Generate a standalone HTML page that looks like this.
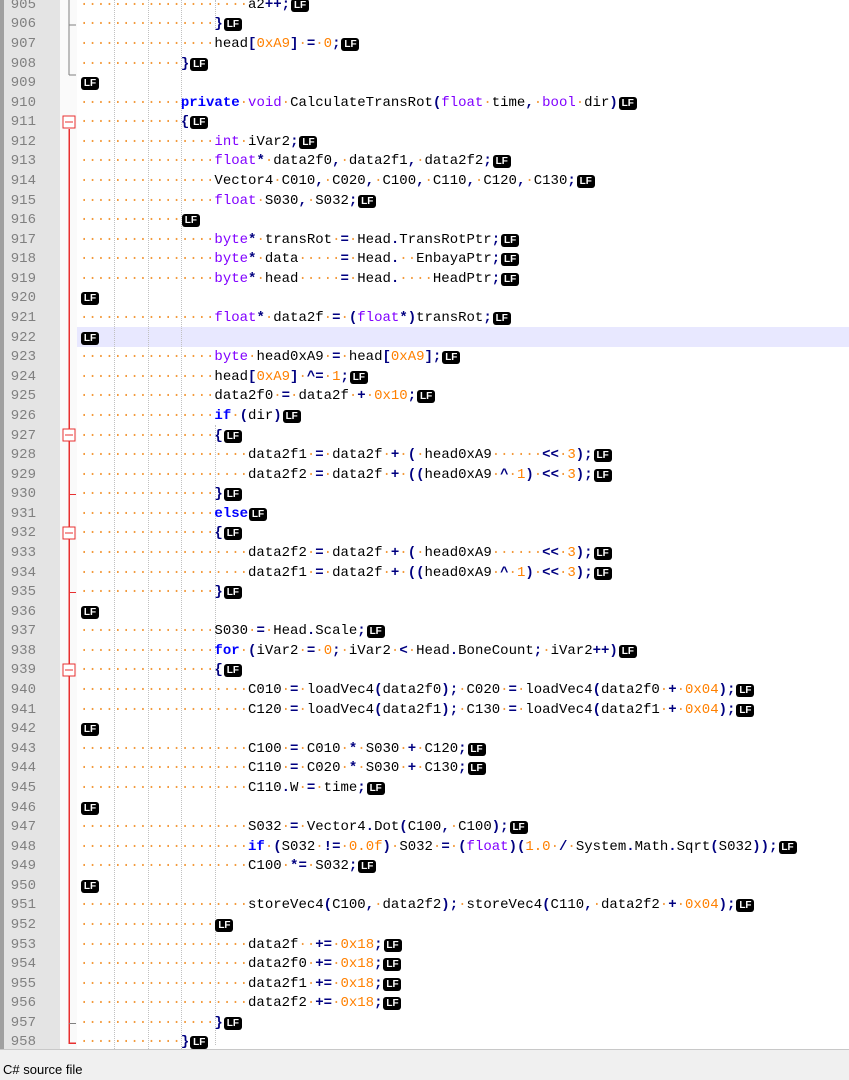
<!DOCTYPE html>
<html><head><meta charset="utf-8"><style>
*{margin:0;padding:0;box-sizing:border-box}
body{width:849px;height:1080px;overflow:hidden;background:#fff;position:relative;font-family:"Liberation Mono",monospace;font-size:14px}
#lb{position:absolute;left:0;top:0;width:4px;height:1049px;background:#a0a0a0}
#gut{position:absolute;left:4px;top:0;width:56px;height:1049px;background:#e4e4e4}
#fold{position:absolute;left:60px;top:0;width:17px;height:1049px;background:#fafafa}
#nums{position:absolute;left:0;top:-4.2px;width:36px;text-align:right;color:#808080;line-height:19.58px;white-space:pre}
#code{position:absolute;left:80px;top:-4.2px;line-height:19.58px;white-space:pre;color:#000}
#cur{position:absolute;left:77px;right:0;top:327.3px;height:19.6px;background:#e8e8ff}
.g{position:absolute;width:0;border-left:1px dotted #c0c0c0}
i{font-style:normal;color:#f39a3c}
.t{color:#8000ff}
.k{color:#0000ff;font-weight:bold}
.n{color:#ff8000}
.o{color:#000080;font-weight:bold}
u{text-decoration:none;display:inline-block;background:#000;color:#fff;font:bold 10px/13px "Liberation Sans",sans-serif;border-radius:3px;width:18px;text-align:center;vertical-align:0px;margin-left:1px;letter-spacing:0}
#sb{position:absolute;left:0;top:1049px;width:849px;height:31px;background:#f0f0f0;border-top:1px solid #c8c8c8;font:13px "Liberation Sans",sans-serif;color:#000;padding:12px 0 0 3px}
</style></head><body>
<div id="lb"></div><div id="gut"></div><div id="fold"></div>
<div id="cur"></div>
<div class="g" style="left:114px;top:0;height:1049px"></div>
<div class="g" style="left:148px;top:0;height:1049px"></div>
<div class="g" style="left:181px;top:0;height:1049px"></div>
<div class="g" style="left:215px;top:0;height:30px"></div>
<div class="g" style="left:215px;top:425px;height:620px"></div>
<svg style="position:absolute;left:60px;top:0" width="17" height="1049" shape-rendering="crispEdges">
<line x1="9" y1="0" x2="9" y2="75" stroke="#808080"/>
<line x1="9" y1="25" x2="16" y2="25" stroke="#808080"/>
<line x1="9" y1="75" x2="16" y2="75" stroke="#808080"/>
<line x1="9" y1="129" x2="9" y2="1044" stroke="#e83030" stroke-width="1.5"/>
<line x1="9" y1="1043" x2="16" y2="1043" stroke="#e83030" stroke-width="1.5"/>
<line x1="9" y1="494.6" x2="16" y2="494.6" stroke="#e83030"/>
<line x1="9" y1="592.5" x2="16" y2="592.5" stroke="#e83030"/>
<line x1="9" y1="1023.5" x2="16" y2="1023.5" stroke="#808080"/>
<g fill="#fff" stroke="#e83030">
<rect x="3" y="116" width="12" height="12"/>
<rect x="3" y="429" width="12" height="12"/>
<rect x="3" y="527" width="12" height="12"/>
<rect x="3" y="664" width="12" height="12"/>
</g>
<g stroke="#e83030"><line x1="5" y1="122" x2="13" y2="122"/><line x1="5" y1="435" x2="13" y2="435"/><line x1="5" y1="533" x2="13" y2="533"/><line x1="5" y1="670" x2="13" y2="670"/></g>
</svg>
<div id="nums">905
906
907
908
909
910
911
912
913
914
915
916
917
918
919
920
921
922
923
924
925
926
927
928
929
930
931
932
933
934
935
936
937
938
939
940
941
942
943
944
945
946
947
948
949
950
951
952
953
954
955
956
957
958</div>
<div id="code"><i>····················</i>a2<span class="o">++;</span><u>LF</u>
<i>················</i><span class="o">}</span><u>LF</u>
<i>················</i>head<span class="o">[</span><span class="n">0xA9</span><span class="o">]</span><i>·</i><span class="o">=</span><i>·</i><span class="n">0</span><span class="o">;</span><u>LF</u>
<i>············</i><span class="o">}</span><u>LF</u>
<u>LF</u>
<i>············</i><span class="k">private</span><i>·</i><span class="t">void</span><i>·</i>CalculateTransRot<span class="o">(</span><span class="t">float</span><i>·</i>time<span class="o">,</span><i>·</i><span class="t">bool</span><i>·</i>dir<span class="o">)</span><u>LF</u>
<i>············</i><span class="o">{</span><u>LF</u>
<i>················</i><span class="t">int</span><i>·</i>iVar2<span class="o">;</span><u>LF</u>
<i>················</i><span class="t">float</span><span class="o">*</span><i>·</i>data2f0<span class="o">,</span><i>·</i>data2f1<span class="o">,</span><i>·</i>data2f2<span class="o">;</span><u>LF</u>
<i>················</i>Vector4<i>·</i>C010<span class="o">,</span><i>·</i>C020<span class="o">,</span><i>·</i>C100<span class="o">,</span><i>·</i>C110<span class="o">,</span><i>·</i>C120<span class="o">,</span><i>·</i>C130<span class="o">;</span><u>LF</u>
<i>················</i><span class="t">float</span><i>·</i>S030<span class="o">,</span><i>·</i>S032<span class="o">;</span><u>LF</u>
<i>············</i><u>LF</u>
<i>················</i><span class="t">byte</span><span class="o">*</span><i>·</i>transRot<i>·</i><span class="o">=</span><i>·</i>Head<span class="o">.</span>TransRotPtr<span class="o">;</span><u>LF</u>
<i>················</i><span class="t">byte</span><span class="o">*</span><i>·</i>data<i>·····</i><span class="o">=</span><i>·</i>Head<span class="o">.</span><i>··</i>EnbayaPtr<span class="o">;</span><u>LF</u>
<i>················</i><span class="t">byte</span><span class="o">*</span><i>·</i>head<i>·····</i><span class="o">=</span><i>·</i>Head<span class="o">.</span><i>····</i>HeadPtr<span class="o">;</span><u>LF</u>
<u>LF</u>
<i>················</i><span class="t">float</span><span class="o">*</span><i>·</i>data2f<i>·</i><span class="o">=</span><i>·</i><span class="o">(</span><span class="t">float</span><span class="o">*)</span>transRot<span class="o">;</span><u>LF</u>
<u>LF</u>
<i>················</i><span class="t">byte</span><i>·</i>head0xA9<i>·</i><span class="o">=</span><i>·</i>head<span class="o">[</span><span class="n">0xA9</span><span class="o">];</span><u>LF</u>
<i>················</i>head<span class="o">[</span><span class="n">0xA9</span><span class="o">]</span><i>·</i><span class="o">^=</span><i>·</i><span class="n">1</span><span class="o">;</span><u>LF</u>
<i>················</i>data2f0<i>·</i><span class="o">=</span><i>·</i>data2f<i>·</i><span class="o">+</span><i>·</i><span class="n">0x10</span><span class="o">;</span><u>LF</u>
<i>················</i><span class="k">if</span><i>·</i><span class="o">(</span>dir<span class="o">)</span><u>LF</u>
<i>················</i><span class="o">{</span><u>LF</u>
<i>····················</i>data2f1<i>·</i><span class="o">=</span><i>·</i>data2f<i>·</i><span class="o">+</span><i>·</i><span class="o">(</span><i>·</i>head0xA9<i>······</i><span class="o">&lt;&lt;</span><i>·</i><span class="n">3</span><span class="o">);</span><u>LF</u>
<i>····················</i>data2f2<i>·</i><span class="o">=</span><i>·</i>data2f<i>·</i><span class="o">+</span><i>·</i><span class="o">((</span>head0xA9<i>·</i><span class="o">^</span><i>·</i><span class="n">1</span><span class="o">)</span><i>·</i><span class="o">&lt;&lt;</span><i>·</i><span class="n">3</span><span class="o">);</span><u>LF</u>
<i>················</i><span class="o">}</span><u>LF</u>
<i>················</i><span class="k">else</span><u>LF</u>
<i>················</i><span class="o">{</span><u>LF</u>
<i>····················</i>data2f2<i>·</i><span class="o">=</span><i>·</i>data2f<i>·</i><span class="o">+</span><i>·</i><span class="o">(</span><i>·</i>head0xA9<i>······</i><span class="o">&lt;&lt;</span><i>·</i><span class="n">3</span><span class="o">);</span><u>LF</u>
<i>····················</i>data2f1<i>·</i><span class="o">=</span><i>·</i>data2f<i>·</i><span class="o">+</span><i>·</i><span class="o">((</span>head0xA9<i>·</i><span class="o">^</span><i>·</i><span class="n">1</span><span class="o">)</span><i>·</i><span class="o">&lt;&lt;</span><i>·</i><span class="n">3</span><span class="o">);</span><u>LF</u>
<i>················</i><span class="o">}</span><u>LF</u>
<u>LF</u>
<i>················</i>S030<i>·</i><span class="o">=</span><i>·</i>Head<span class="o">.</span>Scale<span class="o">;</span><u>LF</u>
<i>················</i><span class="k">for</span><i>·</i><span class="o">(</span>iVar2<i>·</i><span class="o">=</span><i>·</i><span class="n">0</span><span class="o">;</span><i>·</i>iVar2<i>·</i><span class="o">&lt;</span><i>·</i>Head<span class="o">.</span>BoneCount<span class="o">;</span><i>·</i>iVar2<span class="o">++)</span><u>LF</u>
<i>················</i><span class="o">{</span><u>LF</u>
<i>····················</i>C010<i>·</i><span class="o">=</span><i>·</i>loadVec4<span class="o">(</span>data2f0<span class="o">);</span><i>·</i>C020<i>·</i><span class="o">=</span><i>·</i>loadVec4<span class="o">(</span>data2f0<i>·</i><span class="o">+</span><i>·</i><span class="n">0x04</span><span class="o">);</span><u>LF</u>
<i>····················</i>C120<i>·</i><span class="o">=</span><i>·</i>loadVec4<span class="o">(</span>data2f1<span class="o">);</span><i>·</i>C130<i>·</i><span class="o">=</span><i>·</i>loadVec4<span class="o">(</span>data2f1<i>·</i><span class="o">+</span><i>·</i><span class="n">0x04</span><span class="o">);</span><u>LF</u>
<u>LF</u>
<i>····················</i>C100<i>·</i><span class="o">=</span><i>·</i>C010<i>·</i><span class="o">*</span><i>·</i>S030<i>·</i><span class="o">+</span><i>·</i>C120<span class="o">;</span><u>LF</u>
<i>····················</i>C110<i>·</i><span class="o">=</span><i>·</i>C020<i>·</i><span class="o">*</span><i>·</i>S030<i>·</i><span class="o">+</span><i>·</i>C130<span class="o">;</span><u>LF</u>
<i>····················</i>C110<span class="o">.</span>W<i>·</i><span class="o">=</span><i>·</i>time<span class="o">;</span><u>LF</u>
<u>LF</u>
<i>····················</i>S032<i>·</i><span class="o">=</span><i>·</i>Vector4<span class="o">.</span>Dot<span class="o">(</span>C100<span class="o">,</span><i>·</i>C100<span class="o">);</span><u>LF</u>
<i>····················</i><span class="k">if</span><i>·</i><span class="o">(</span>S032<i>·</i><span class="o">!=</span><i>·</i><span class="n">0.0f</span><span class="o">)</span><i>·</i>S032<i>·</i><span class="o">=</span><i>·</i><span class="o">(</span><span class="t">float</span><span class="o">)(</span><span class="n">1.0</span><i>·</i><span class="o">/</span><i>·</i>System<span class="o">.</span>Math<span class="o">.</span>Sqrt<span class="o">(</span>S032<span class="o">));</span><u>LF</u>
<i>····················</i>C100<i>·</i><span class="o">*=</span><i>·</i>S032<span class="o">;</span><u>LF</u>
<u>LF</u>
<i>····················</i>storeVec4<span class="o">(</span>C100<span class="o">,</span><i>·</i>data2f2<span class="o">);</span><i>·</i>storeVec4<span class="o">(</span>C110<span class="o">,</span><i>·</i>data2f2<i>·</i><span class="o">+</span><i>·</i><span class="n">0x04</span><span class="o">);</span><u>LF</u>
<i>················</i><u>LF</u>
<i>····················</i>data2f<i>··</i><span class="o">+=</span><i>·</i><span class="n">0x18</span><span class="o">;</span><u>LF</u>
<i>····················</i>data2f0<i>·</i><span class="o">+=</span><i>·</i><span class="n">0x18</span><span class="o">;</span><u>LF</u>
<i>····················</i>data2f1<i>·</i><span class="o">+=</span><i>·</i><span class="n">0x18</span><span class="o">;</span><u>LF</u>
<i>····················</i>data2f2<i>·</i><span class="o">+=</span><i>·</i><span class="n">0x18</span><span class="o">;</span><u>LF</u>
<i>················</i><span class="o">}</span><u>LF</u>
<i>············</i><span class="o">}</span><u>LF</u></div>
<div id="sb">C# source file</div>
</body></html>
